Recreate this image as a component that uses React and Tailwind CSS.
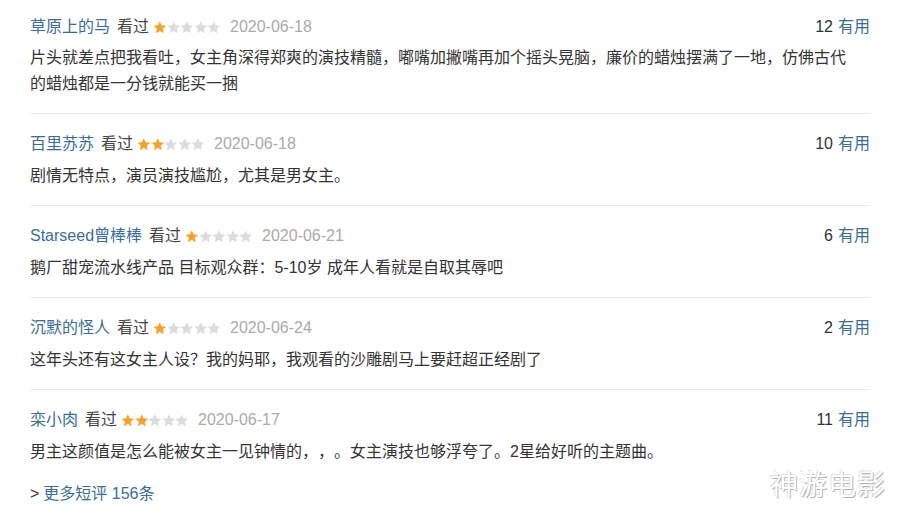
import React from "react";

const reviews = [
  {
    name: "草原上的马",
    stars: 1,
    date: "2020-06-18",
    votes: 12,
    text: "片头就差点把我看吐，女主角深得郑爽的演技精髓，嘟嘴加撇嘴再加个摇头晃脑，廉价的蜡烛摆满了一地，仿佛古代的蜡烛都是一分钱就能买一捆",
  },
  { name: "百里苏苏", stars: 2, date: "2020-06-18", votes: 10, text: "剧情无特点，演员演技尴尬，尤其是男女主。" },
  { name: "Starseed曾棒棒", stars: 1, date: "2020-06-21", votes: 6, text: "鹅厂甜宠流水线产品 目标观众群：5-10岁 成年人看就是自取其辱吧" },
  { name: "沉默的怪人", stars: 1, date: "2020-06-24", votes: 2, text: "这年头还有这女主人设？我的妈耶，我观看的沙雕剧马上要赶超正经剧了" },
  { name: "栾小肉", stars: 2, date: "2020-06-17", votes: 11, text: "男主这颜值是怎么能被女主一见钟情的，，。女主演技也够浮夸了。2星给好听的主题曲。" },
];

const Star = ({ on }) => (
  <svg width="13.6" height="13" viewBox="0 0 24 23">
    <path
      d="M12 0.5l3.3 7.2 7.9.8-5.9 5.3 1.7 7.8L12 17.7l-7 3.9 1.7-7.8L0.8 8.5l7.9-.8z"
      fill={on ? "#f6a32e" : "#dcdcdc"}
    />
  </svg>
);

function Review({ r, first, last }) {
  return (
    <div className={`${first ? "pt-[15px]" : "pt-[18px]"} ${last ? "" : "pb-[16px] border-b border-[#e8e8e8]"}`}>
      <div className="flex items-center justify-between h-[24px] leading-[24px]">
        <div className="flex items-center">
          <span className="text-[#3a6d96] mr-[7px]">{r.name}</span>
          <span className="text-[#444] mr-[4px]">看过</span>
          <span className="flex items-center mr-[9px]">
            {[0, 1, 2, 3, 4].map((i) => (
              <Star key={i} on={i < r.stars} />
            ))}
          </span>
          <span className="text-[#aaa]">{r.date}</span>
        </div>
        <div>
          <span className="text-[#333]">{r.votes}</span>
          <span className="text-[#3a6d96] ml-[5px]">有用</span>
        </div>
      </div>
      <p className={`${first ? "mt-[6px]" : "mt-[7px]"} leading-[26px] text-[#333] w-[822px] [text-spacing-trim:space-all]`}>
        {r.text}
      </p>
    </div>
  );
}

export default function App() {
  return (
    <div
      className="relative w-[900px] h-[516px] bg-white overflow-hidden text-[16px]"
      style={{ fontFamily: '"Liberation Sans", "Noto Sans CJK SC", sans-serif' }}
    >
      <div className="ml-[30px] w-[840px]">
        {reviews.map((r, i) => (
          <Review key={i} r={r} first={i === 0} last={i === reviews.length - 1} />
        ))}
        <div className="mt-[17px] leading-[24px]">
          <span className="text-[#333] mr-[4px]">&gt;</span>
          <span className="text-[#3a6d96]">更多短评 156条</span>
        </div>
      </div>
      <div className="absolute right-[14px] bottom-[16px] text-[28px] leading-none text-white tracking-[1px] [text-shadow:1px_1px_0_#b5b5b5,-1px_-1px_0_#e0e0e0]">
        神游电影
      </div>
    </div>
  );
}
